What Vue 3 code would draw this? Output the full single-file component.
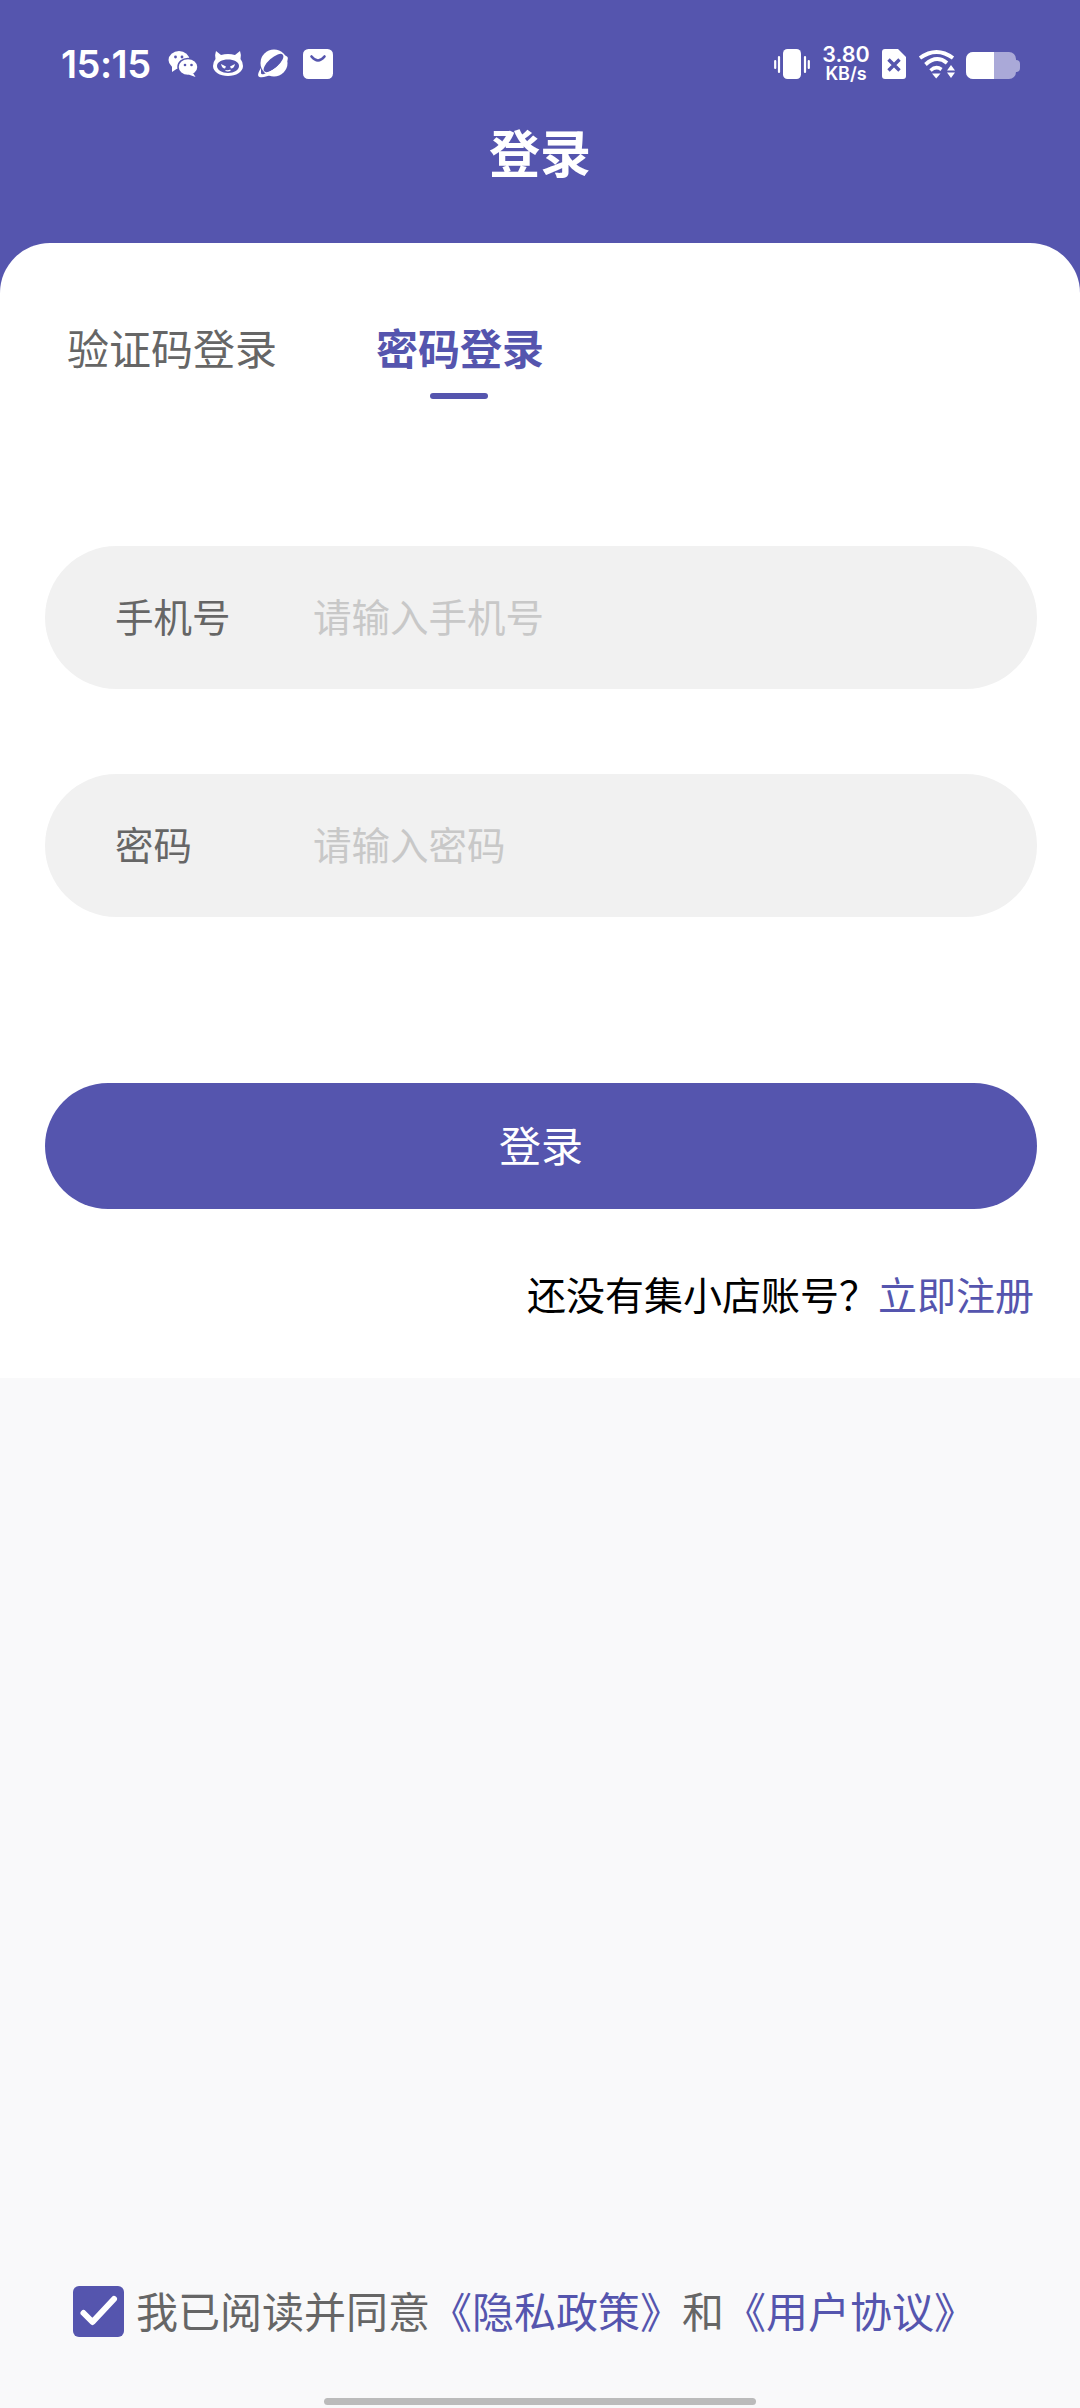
<template>
  <div class="page">
    <div class="upper">
      <div class="status-bar">
        <div class="status-left">
          <span class="time">15:15</span>
          <svg class="note-icon" viewBox="0 0 30 30">
            <ellipse cx="11" cy="11" rx="10.500" ry="9" fill="#fff" />
            <path d="M4 17l0 6 6-4z" fill="#fff" />
            <ellipse cx="20" cy="18" rx="10" ry="8.600" fill="#fff" stroke="#5555ae" stroke-width="1.500" />
            <path d="M25 24l2.500 4-7-2.500z" fill="#fff" />
            <circle cx="7.500" cy="8" r="1.400" fill="#5555ae" />
            <circle cx="14" cy="8" r="1.400" fill="#5555ae" />
            <circle cx="17" cy="16" r="1.300" fill="#5555ae" />
            <circle cx="23.500" cy="16" r="1.300" fill="#5555ae" />
          </svg>
          <svg class="note-icon" viewBox="0 0 30 30">
            <path d="M3 2l5 4q7-2 14 0l5-4q1.500 4 .5 8q2.500 3 2.500 7c0 6-7 10-15 10S0 23 0 17q0-4 2.500-7q-1-4 .5-8z" fill="#fff" />
            <path d="M4 17c0-4 5-6.500 11-6.500s11 2.500 11 6.500c0 4-5 7-11 7S4 21 4 17z" fill="#5555ae" />
            <path d="M8 15l5 2.500-1 2q-3 0-4-4.500zM22 15l-5 2.500 1 2q3 0 4-4.500z" fill="#fff" />
            <path d="M12.500 21.500q3 1 5-.5" fill="none" stroke="#fff" stroke-width="1.200" />
          </svg>
          <svg class="note-icon" viewBox="0 0 30 30">
            <circle cx="16" cy="14" r="13.500" fill="#fff" />
            <ellipse cx="15.500" cy="14" rx="12.500" ry="5" transform="rotate(-42 15.500 14)" fill="#5555ae" />
            <path d="M3 19Q-2 27 1.500 28C6 29.500 20 25 28.500 13q2-3 1-5-1-1.500-3-1.500 1.500 1.500-.5 4Q18 21 6 25q-3 .8-3-1z" fill="#fff" />
          </svg>
          <svg class="note-icon" viewBox="0 0 30 30">
            <rect width="30" height="30" rx="5.500" fill="#fff" />
            <path d="M8.500 7.500q6.500 8 13 0" fill="none" stroke="#5555ae" stroke-width="2.600" stroke-linecap="round" />
          </svg>
        </div>
        <div class="status-right">
          <svg class="vibrate" viewBox="0 0 36 30">
            <rect x="9" y="0" width="18" height="30" rx="4.500" fill="#fff" />
            <path d="M5 8v15M1.200 12v7M31 8v15M34.800 12v7" stroke="#fff" stroke-width="2.200" stroke-linecap="round" />
          </svg>
          <div class="speed">
            <span>3.80</span>
            <span class="speed-unit">KB/s</span>
          </div>
          <svg class="sim" viewBox="0 0 24 30">
            <path d="M3 0h13l8 8v19a3 3 0 0 1-3 3H3a3 3 0 0 1-3-3V3a3 3 0 0 1 3-3z" fill="#fff" />
            <path d="M6.500 10.500l11 11M17.500 10.500l-11 11" stroke="#5555ae" stroke-width="3.400" />
          </svg>
          <svg class="wifi" viewBox="0 0 37 30">
            <path d="M2 9Q18.500-3 35 9" fill="none" stroke="#fff" stroke-width="3.800" />
            <path d="M7.500 15.500Q18.500 5.500 29 14" fill="none" stroke="#fff" stroke-width="3.800" />
            <path d="M12.500 21.500Q18 16.500 23.500 20.500" fill="none" stroke="#fff" stroke-width="3.600" />
            <path d="M14 24.500h8.500L18.200 29.500z" fill="#fff" />
            <path d="M33 16l4 5.500h-8zM29 23.500h8l-4 5.500z" fill="#fff" />
          </svg>
          <div class="battery">
            <div class="battery-body">
              <div class="battery-fill"></div>
            </div>
            <div class="battery-tip"></div>
          </div>
        </div>
      </div>
      <h1 class="title">登录</h1>

      <div class="sheet">
        <div class="tabs">
          <div class="tab">验证码登录</div>
          <div class="tab active">密码登录</div>
        </div>

        <div class="field">
          <span class="field-label">手机号</span>
          <span class="placeholder">请输入手机号</span>
        </div>
        <div class="field second">
          <span class="field-label">密码</span>
          <span class="placeholder">请输入密码</span>
        </div>

        <button class="login-btn">登录</button>

        <div class="register">
          还没有集小店账号？<span class="link">立即注册</span>
        </div>
      </div>
    </div>

    <div class="agree">
      <span class="checkbox">
        <svg viewBox="0 0 51 51" width="51" height="51">
          <path d="M10.500 27l9 9L41 13" fill="none" stroke="#fff" stroke-width="6" stroke-linecap="round" stroke-linejoin="round" />
        </svg>
      </span>
      <div class="agree-text">
        <span>我已阅读并同意</span><span class="link">《隐私政策》</span><span>和</span><span class="link">《用户协议》</span>
      </div>
    </div>
    <div class="home-bar"></div>
  </div>
</template>

<script setup>
</script>

<style>
html, body {
  margin: 0;
  background: #f9f9fa;
}
</style>

<style scoped>
.page {
  height: 2408px;
  display: flex;
  flex-direction: column;
  background: #f9f9fa;
  font-family: "Noto Sans CJK SC", "Noto Sans", sans-serif;
  overflow: hidden;
}

.upper {
  background: #5555ae;
}

.status-bar {
  height: 128px;
  box-sizing: border-box;
  padding: 49px 60px 0 61px;
  display: flex;
  justify-content: space-between;
  align-items: flex-start;
  color: #fff;
}

.status-left {
  display: flex;
  align-items: center;
  height: 30px;
}

.time {
  font-family: Inter, "Noto Sans", sans-serif;
  font-size: 38px;
  font-weight: 600;
  width: 107px;
  line-height: 30px;
  letter-spacing: -0.5px;
}

.note-icon {
  width: 30px;
  height: 30px;
  margin-right: 15px;
}

.status-right {
  display: flex;
  align-items: center;
  height: 30px;
}

.vibrate {
  width: 36px;
  height: 30px;
  margin-right: 12px;
}

.speed {
  width: 48px;
  margin-right: 12px;
  display: flex;
  flex-direction: column;
  align-items: center;
  font-family: Inter, "Noto Sans", sans-serif;
  font-size: 21.500px;
  font-weight: 600;
  line-height: 19px;
}

.speed-unit {
  font-size: 18px;
}

.sim {
  width: 24px;
  height: 30px;
  margin-right: 12px;
}

.wifi {
  width: 37px;
  height: 30px;
  margin-right: 11px;
}

.battery {
  display: flex;
  align-items: center;
  margin-top: 3px;
}

.battery-body {
  width: 50px;
  height: 27px;
  border-radius: 7px;
  background: #aaa9d8;
  overflow: hidden;
}

.battery-fill {
  width: 28px;
  height: 100%;
  background: #fff;
}

.battery-tip {
  width: 4px;
  height: 12px;
  border-radius: 0 4px 4px 0;
  background: #aaa9d8;
}

.title {
  margin: 0;
  height: 115px;
  font-size: 51px;
  font-weight: 700;
  line-height: 46px;
  text-align: center;
  color: #fff;
}

.sheet {
  height: 1135px;
  box-sizing: border-box;
  background: #fff;
  border-radius: 50px 50px 0 0;
  padding: 0 43px 0 45px;
}

.tabs {
  display: flex;
  gap: 99px;
  padding: 73px 0 0 22px;
  height: 303px;
  box-sizing: border-box;
}

.tab {
  position: relative;
  height: 62px;
  font-size: 42px;
  line-height: 62px;
  color: #666;
}

.tab.active {
  color: #5555ae;
  font-weight: 700;
}

.tab.active::after {
  content: "";
  position: absolute;
  left: 54px;
  bottom: -21px;
  width: 58px;
  height: 6px;
  border-radius: 3px;
  background: #5555ae;
}

.field {
  height: 143px;
  box-sizing: border-box;
  border-radius: 72px;
  background: #f1f1f1;
  display: flex;
  align-items: center;
  padding: 0 0 5px 70px;
  font-size: 38.500px;
}

.field.second {
  margin-top: 85px;
}

.field-label {
  width: 198px;
  color: #666;
}

.placeholder {
  color: #c8c8c8;
}

.login-btn {
  display: block;
  width: 100%;
  height: 126px;
  margin-top: 166px;
  padding: 0 0 5px;
  border: none;
  border-radius: 63px;
  background: #5555ae;
  color: #fff;
  font-family: inherit;
  font-size: 42px;
}

.register {
  margin-top: 54px;
  padding-right: 3px;
  text-align: right;
  font-size: 39px;
  line-height: 60px;
  color: #000;
}

.link {
  color: #5555ae;
}

.agree {
  margin-top: auto;
  margin-bottom: 71px;
  padding-left: 73px;
  display: flex;
  align-items: center;
  font-size: 42px;
  line-height: 51px;
  color: #666;
}

.agree-text {
  margin-top: -5px;
}

.checkbox {
  width: 51px;
  height: 51px;
  margin-right: 12px;
  border-radius: 6px;
  background: #5555ae;
}

.checkbox svg {
  display: block;
}

.home-bar {
  position: absolute;
  left: 324px;
  top: 2398px;
  width: 432px;
  height: 7px;
  border-radius: 4px;
  background: #bbb;
}
</style>
